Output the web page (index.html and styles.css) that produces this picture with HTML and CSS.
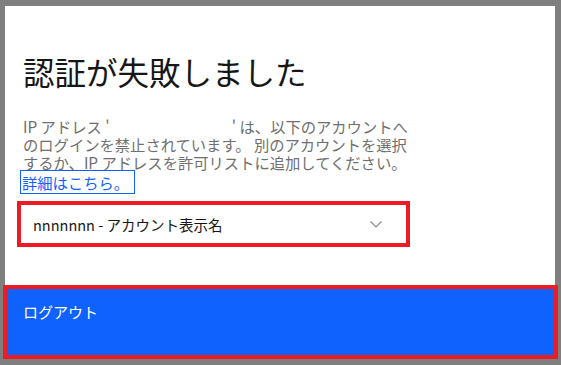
FILE: index.html
```html
<!DOCTYPE html>
<html lang="ja">
<head>
<meta charset="utf-8">
<title>認証が失敗しました</title>
<link rel="stylesheet" href="styles.css">
</head>
<body>
<div class="screen">
  <div class="panel">
    <h1 class="title">認証が失敗しました</h1>
    <p class="message">IP アドレス '&#8195;&#8195;&#8195;&#8195;&#8195;&#8195;&#8195;&#8195;' は、以下のアカウントへのログインを禁止されています。 別のアカウントを選択するか、IP アドレスを許可リストに追加してください。</p>
    <a class="link" href="#">詳細はこちら。</a>
    <div class="select">
      <span class="select-text">nnnnnnn - アカウント表示名</span>
      <svg class="chevron" width="12" height="7" viewBox="0 0 12 7"><path d="M0.5 0.5 L6 6 L11.5 0.5" fill="none" stroke="#8d8d8d" stroke-width="1.2"/></svg>
    </div>
  </div>
  <div class="logout">ログアウト</div>
</div>
</body>
</html>
```

FILE: styles.css
```css
html, body {
  margin: 0;
  padding: 0;
  background: #7f7f7f;
  font-family: "Noto Sans CJK JP", "Noto Sans", sans-serif;
}
.screen {
  width: 561px;
  height: 365px;
  padding: 6px 6px 0 5px;
  box-sizing: border-box;
  display: flex;
  flex-direction: column;
}
.panel {
  background: #ffffff;
  height: 279px;
  padding: 0 18px;
  box-sizing: border-box;
  display: flex;
  flex-direction: column;
  align-items: flex-start;
}
.title {
  margin: 47px 0 0 0;
  font-size: 31.5px;
  font-weight: 400;
  line-height: 36px;
  color: #161616;
}
.message {
  margin: 28px 0 0 0;
  font-size: 15.3px;
  line-height: 18px;
  color: #6f6f6f;
  width: 393px;
}
.link {
  display: block;
  font-size: 15.3px;
  color: #0f62fe;
  text-decoration: none;
  outline: 1px solid #0f62fe;
  padding: 0 5px 0 1px;
  margin: 0 0 0 -2px;
  line-height: 22px;
}
.select {
  margin: 8px 0 0 -6px;
  width: 393px;
  height: 46px;
  box-sizing: border-box;
  border: 4px solid #ed1c24;
  display: flex;
  align-items: center;
  padding: 0 24px 0 12px;
  justify-content: space-between;
}
.select-text {
  font-size: 14.5px;
  color: #161616;
}
.chevron {
  display: block;
}
.logout {
  margin: 0 -3px 0 -2px;
  height: 74px;
  box-sizing: border-box;
  border: 4px solid #ed1c24;
  background: #0f62fe;
  color: #ffffff;
  font-size: 15px;
  padding: 12px 0 0 16px;
}
```
